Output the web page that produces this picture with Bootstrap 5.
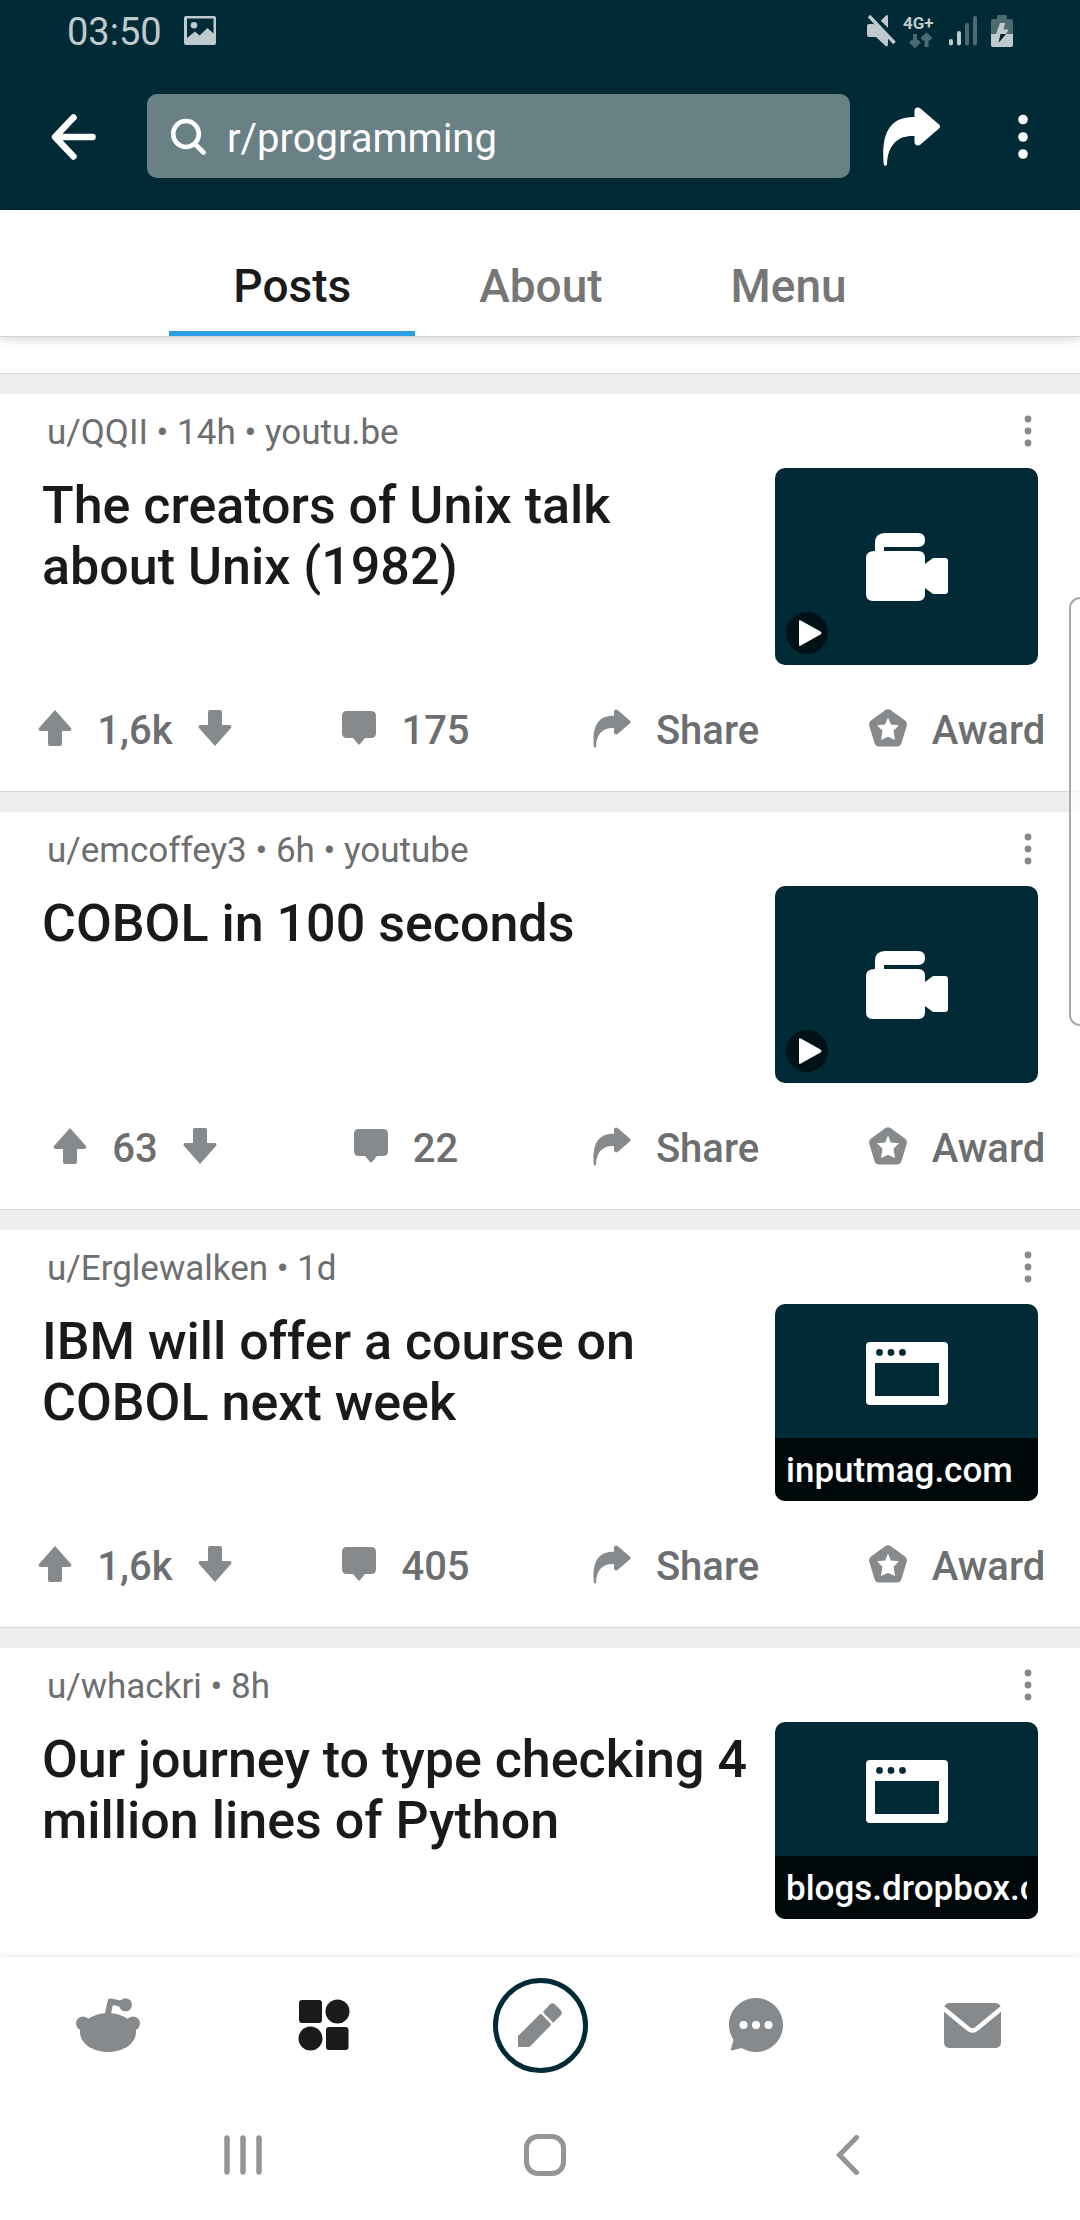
<!DOCTYPE html>
<html lang="en">
<head>
<meta charset="utf-8">
<meta name="viewport" content="width=device-width, initial-scale=1">
<title>r/programming</title>
<link href="https://cdn.jsdelivr.net/npm/bootstrap@5.3.0/dist/css/bootstrap.min.css" rel="stylesheet">
<style>
  :root { --ink: #1a1a1b; --muted: #6c6e70; --icon: #878a8c; --base: #002b36; --strip: #edeef0; }
  body { font-family: Roboto, "Noto Sans", sans-serif; color: var(--ink); background: #fff; }
  svg { display: block; flex: none; }
  button, a { color: inherit; text-decoration: none; }
  .plain { background: none; border: 0; padding: 0; color: inherit; font-weight: inherit; }

  .app-header { background: var(--base); height: 210px; }
  .status-row { height: 62px; padding: 0 67px; color: #bfcacd; font-size: 38px; line-height: 64px; }
  .status-left { gap: 22px; }
  .status-icons { gap: 14px; margin-top: 14px; }
  .status-pair { gap: 7px; }
  .tool-row { height: 148px; padding: 0 52px 0 51px; }
  .back-btn, .more-btn { margin-top: 52px; }
  .share-btn { margin-top: 45px; }
  .search-box { height: 84px; margin: 32px 32px 0 51px; padding: 0 24px; gap: 21px; border-radius: 10px; background: #698085; }
  .search-box input { min-width: 0; background: none; border: 0; outline: 0; padding: 6px 0 0; color: #fff; font-size: 40px; line-height: 48px; }
  .more-btn { padding-left: 77px; }

  .tab-row { height: 127px; border-bottom: 1px solid #d4d4d4; box-shadow: 0 2px 10px rgba(0,0,0,.18); z-index: 2; }
  .tab-row a { padding: 49px 64px 0; font-size: 46px; line-height: 54px; font-weight: 500; color: #767676; border-bottom: 5px solid transparent; }
  .tab-row a.active { color: var(--ink); border-color: #2c9fe5; }

  .lead-gap { height: 36px; }
  .strip { height: 21px; background: var(--strip); border-top: 1px solid #d6d8da; }
  .post { padding-top: 18px; }
  .meta-row { height: 56px; padding: 0 48px 0 47px; font-size: 35px; line-height: 41px; color: var(--muted); }
  .meta-row button { color: var(--icon); margin-top: 3px; }
  .body-row { padding: 0 42px; gap: 20px; }
  .post-title { margin: 7px 0 0; font-size: 52px; line-height: 61px; font-weight: 500; }
  .thumb { flex: none; width: 263px; height: 197px; border-radius: 10px; background: var(--base); color: #fff; }
  .play { left: 11px; bottom: 11px; }
  .host { padding: 0 11px; height: 63px; background: rgba(0,0,0,.8); font-size: 35px; line-height: 66px; font-weight: 500; }
  .action-row { height: 126px; font-size: 40px; line-height: 48px; font-weight: 500; color: var(--muted); }
  .action-row svg { color: var(--icon); }
  .action-row span { padding-top: 5px; }
  .action-row .col-3 { gap: 25px; }
  .action-row button.col-3 { padding-left: 2px; }
  .action-row button.award { padding-left: 24px; }

  .edge-panel { top: 597px; right: 0; width: 11px; height: 429px; border: 2px solid #a9a9a9; border-right: 0; border-radius: 18px 0 0 18px; background: rgba(255,255,255,.75); z-index: 3; }

  .bottom-bar { height: 136px; box-shadow: 0 -2px 6px rgba(0,0,0,.08); color: var(--icon); z-index: 2; }
  .compose { width: 95px; height: 95px; border: 5px solid var(--base); border-radius: 50%; }
  .system-bar { height: 127px; padding: 0 82px 3px 92px; color: #959595; z-index: 3; }
</style>
<script src="https://cdn.jsdelivr.net/npm/bootstrap@5.3.0/dist/js/bootstrap.bundle.min.js"></script>
</head>
<body>
<svg width="0" height="0" class="position-absolute" aria-hidden="true">
  <symbol id="i-share" viewBox="0 0 58 59"><path fill="currentColor" d="M32 10V4C32 .5 35.500-.6 38 1.600L56.500 17.500Q58.500 19.500 56.500 21.500L38 37.500C35.500 39.500 32 38.500 32 35V29C17 28 5.500 36 4.500 57C4.300 59.400 1.500 59.400 1.200 57C-1.500 27 7 9.500 32 10Z"/></symbol>
  <symbol id="i-up" viewBox="0 0 34 36"><path fill="currentColor" d="M17 0L33 18Q34.500 21 31 21H24V34Q24 36 22 36H12Q10 36 10 34V21H3Q-.5 21 1 18Z"/></symbol>
  <symbol id="i-down" viewBox="0 0 34 36"><path fill="currentColor" d="M17 36L33 18Q34.500 15 31 15H24V2Q24 0 22 0H12Q10 0 10 2V15H3Q-.5 15 1 18Z"/></symbol>
  <symbol id="i-comment" viewBox="0 0 34 34"><path fill="currentColor" d="M5 0H29Q34 0 34 5V22Q34 27 29 27H23L18 33Q17 34 16 33L11 27H5Q0 27 0 22V5Q0 0 5 0Z"/></symbol>
  <symbol id="i-award" viewBox="0 0 38 38"><path fill="currentColor" fill-rule="evenodd" d="M16.500 1Q19 -.6 21.500 1L36 11.500Q38.500 13.500 37.800 16.500L32.500 34Q31.400 37.500 28 37.500H10Q6.600 37.500 5.500 34L.2 16.500Q-.5 13.500 2 11.500ZM19 8.500L16.200 15.500L8 16.300L13.500 21.800L12 31L19 27.800L26 31L24.500 21.800L30 16.300L21.800 15.500Z"/></symbol>
  <symbol id="i-dots" viewBox="0 0 8 32"><g fill="currentColor"><circle cx="4" cy="4" r="3.400"/><circle cx="4" cy="16" r="3.400"/><circle cx="4" cy="28" r="3.400"/></g></symbol>
  <symbol id="i-camera" viewBox="0 0 82 68"><path fill="currentColor" d="M9 18V10Q9 0 19 0H52Q59 0 59 7Q59 14 52 14H18V18H52Q59 18 59 25V31L67 25H79Q82 25 82 28V58Q82 61 79 61H67L59 55V61Q59 68 52 68H7Q0 68 0 61V25Q0 18 9 18Z"/></symbol>
  <symbol id="i-play" viewBox="0 0 42 42"><circle cx="21" cy="21" r="21" fill="#001216"/><path fill="#fff" d="M13 9.500Q13 7.600 14.800 8.600L34.500 19.500Q36.500 21 34.500 22.500L14.800 33.600Q13 34.500 13 32.600Z"/></symbol>
  <symbol id="i-window" viewBox="0 0 82 63"><path fill="currentColor" fill-rule="evenodd" d="M4 0H78Q82 0 82 4V59Q82 63 78 63H4Q0 63 0 59V4Q0 0 4 0ZM9 21V54H73V21ZM13.500 7A3.400 3.400 0 1 0 13.500 13.800A3.400 3.400 0 1 0 13.500 7ZM25 7A3.400 3.400 0 1 0 25 13.800A3.400 3.400 0 1 0 25 7ZM36.500 7A3.400 3.400 0 1 0 36.500 13.800A3.400 3.400 0 1 0 36.500 7Z"/></symbol>
</svg>

<div class="d-flex flex-column vh-100 overflow-hidden position-relative">
  <header class="app-header flex-shrink-0">
    <div class="status-row d-flex align-items-start justify-content-between">
      <div class="status-left d-flex">
        <span>03:50</span>
        <svg class="mt-3" width="32" height="29" viewBox="0 0 32 29" fill="currentColor"><path fill-rule="evenodd" d="M2 0H30Q32 0 32 2V27Q32 29 30 29H2Q0 29 0 27V2Q0 0 2 0ZM3 2.500V22L11 15.500L15.500 19.500L23.500 12L29.500 17.500V2.500Z"/><circle cx="10" cy="9.300" r="3.300"/></svg>
      </div>
      <div class="status-icons d-flex">
        <div class="status-pair d-flex">
          <svg width="29" height="33" viewBox="0 0 29 33"><path fill="currentColor" d="M0 12Q0 10 2 10H7L21 20V30Q21 34 18 31.500L9 23H2Q0 23 0 21ZM13.500 7L19 1.500Q21 0 21 2.500V14Z"/><path d="M4 -1L30.500 26" stroke="#002b36" stroke-width="3"/><path d="M2 2L27.500 29" stroke="currentColor" stroke-width="3.500"/></svg>
          <svg class="overflow-visible" width="32" height="34" viewBox="0 0 32 34"><text x="0" y="15" font-size="17" font-weight="700" fill="currentColor">4G+</text><path d="M12 20V30M7.500 27L12 31.500L16.500 27M23.500 33V22M19 25.500L23.500 21L28 25.500" fill="none" stroke="#4d6a71" stroke-width="4"/></svg>
        </div>
        <svg width="28" height="33" viewBox="0 0 28 33" fill="none" stroke-width="4" stroke-linecap="round"><path d="M2 27V29.500M10 19V29.500" stroke="currentColor"/><path d="M18 11V29.500M26 4V29.500" stroke="#4d6a71"/></svg>
        <svg width="22" height="34" viewBox="0 0 22 34"><path fill="#4d6a71" d="M6 5V2Q6 1 7 1H15Q16 1 16 2V5H20Q22 5 22 7V20H0V7Q0 5 2 5Z"/><path fill="currentColor" d="M0 20H22V31Q22 33 20 33H2Q0 33 0 31ZM9 9H14L12.500 15.500H17.500L15 20H5Z"/><path fill="#0b1d22" d="M9.500 20H15L7.500 29Z"/></svg>
      </div>
    </div>
    <div class="tool-row d-flex align-items-start">
      <button class="plain back-btn" type="button" aria-label="Back">
        <svg width="45" height="46" viewBox="0 0 45 46" fill="none" stroke="#fff" stroke-width="6.500" stroke-linecap="round" stroke-linejoin="round"><path d="M22.500 3.500L4 23L22.500 42.500M5 23H41.500"/></svg>
      </button>
      <div class="search-box d-flex align-items-center flex-grow-1">
        <label for="search" aria-label="Search"><svg width="35" height="37" viewBox="0 0 35 37" fill="none" stroke="#fff" stroke-width="4.600" stroke-linecap="round"><ellipse cx="15" cy="16" rx="12.800" ry="13"/><path d="M24.500 26.500L32.500 34.500"/></svg></label>
        <input id="search" class="flex-grow-1" type="text" value="r/programming">
      </div>
      <button class="plain share-btn text-white" type="button" aria-label="Share"><svg width="59" height="59"><use href="#i-share"/></svg></button>
      <button class="plain more-btn" type="button" aria-label="More">
        <svg width="10" height="46" viewBox="0 0 10 46" fill="#fff"><circle cx="5" cy="5.500" r="4.800"/><circle cx="5" cy="23" r="4.800"/><circle cx="5" cy="40" r="4.800"/></svg>
      </button>
    </div>
  </header>

  <nav class="tab-row d-flex justify-content-center flex-shrink-0 position-relative bg-white">
    <a class="active" href="#">Posts</a>
    <a href="#">About</a>
    <a href="#">Menu</a>
  </nav>

  <main class="flex-grow-1 overflow-hidden">
    <div class="lead-gap"></div>
    <div class="strip"></div>

    <article class="post">
      <div class="meta-row d-flex justify-content-between align-items-start">
        <span>u/QQII • 14h • youtu.be</span>
        <button class="plain" type="button" aria-label="Post options"><svg width="8" height="32"><use href="#i-dots"/></svg></button>
      </div>
      <div class="body-row d-flex justify-content-between align-items-start">
        <h2 class="post-title">The creators of Unix talk about Unix (1982)</h2>
        <a class="thumb d-flex align-items-center justify-content-center position-relative" href="#" aria-label="Play video">
          <svg width="82" height="68"><use href="#i-camera"/></svg>
          <svg class="play position-absolute" width="42" height="42"><use href="#i-play"/></svg>
        </a>
      </div>
      <div class="action-row row g-0">
        <div class="col-3 d-flex align-items-center justify-content-center">
          <button class="plain" type="button" aria-label="Upvote"><svg width="34" height="36"><use href="#i-up"/></svg></button><span>1,6k</span><button class="plain" type="button" aria-label="Downvote"><svg width="34" height="36"><use href="#i-down"/></svg></button>
        </div>
        <button class="plain col-3 d-flex align-items-center justify-content-center" type="button"><svg width="34" height="34"><use href="#i-comment"/></svg><span>175</span></button>
        <button class="plain col-3 d-flex align-items-center justify-content-center" type="button"><svg width="38" height="39"><use href="#i-share"/></svg><span>Share</span></button>
        <button class="plain award col-3 d-flex align-items-center justify-content-center" type="button"><svg width="38" height="38"><use href="#i-award"/></svg><span>Award</span></button>
      </div>
    </article>
    <div class="strip"></div>

    <article class="post">
      <div class="meta-row d-flex justify-content-between align-items-start">
        <span>u/emcoffey3 • 6h • youtube</span>
        <button class="plain" type="button" aria-label="Post options"><svg width="8" height="32"><use href="#i-dots"/></svg></button>
      </div>
      <div class="body-row d-flex justify-content-between align-items-start">
        <h2 class="post-title">COBOL in 100 seconds</h2>
        <a class="thumb d-flex align-items-center justify-content-center position-relative" href="#" aria-label="Play video">
          <svg width="82" height="68"><use href="#i-camera"/></svg>
          <svg class="play position-absolute" width="42" height="42"><use href="#i-play"/></svg>
        </a>
      </div>
      <div class="action-row row g-0">
        <div class="col-3 d-flex align-items-center justify-content-center">
          <button class="plain" type="button" aria-label="Upvote"><svg width="34" height="36"><use href="#i-up"/></svg></button><span>63</span><button class="plain" type="button" aria-label="Downvote"><svg width="34" height="36"><use href="#i-down"/></svg></button>
        </div>
        <button class="plain col-3 d-flex align-items-center justify-content-center" type="button"><svg width="34" height="34"><use href="#i-comment"/></svg><span>22</span></button>
        <button class="plain col-3 d-flex align-items-center justify-content-center" type="button"><svg width="38" height="39"><use href="#i-share"/></svg><span>Share</span></button>
        <button class="plain award col-3 d-flex align-items-center justify-content-center" type="button"><svg width="38" height="38"><use href="#i-award"/></svg><span>Award</span></button>
      </div>
    </article>
    <div class="strip"></div>

    <article class="post">
      <div class="meta-row d-flex justify-content-between align-items-start">
        <span>u/Erglewalken • 1d</span>
        <button class="plain" type="button" aria-label="Post options"><svg width="8" height="32"><use href="#i-dots"/></svg></button>
      </div>
      <div class="body-row d-flex justify-content-between align-items-start">
        <h2 class="post-title">IBM will offer a course on COBOL next week</h2>
        <a class="thumb d-flex flex-column overflow-hidden" href="#">
          <div class="flex-grow-1 d-flex align-items-center justify-content-center pt-1"><svg width="82" height="63"><use href="#i-window"/></svg></div>
          <div class="host"><div class="overflow-hidden text-nowrap">inputmag.com</div></div>
        </a>
      </div>
      <div class="action-row row g-0">
        <div class="col-3 d-flex align-items-center justify-content-center">
          <button class="plain" type="button" aria-label="Upvote"><svg width="34" height="36"><use href="#i-up"/></svg></button><span>1,6k</span><button class="plain" type="button" aria-label="Downvote"><svg width="34" height="36"><use href="#i-down"/></svg></button>
        </div>
        <button class="plain col-3 d-flex align-items-center justify-content-center" type="button"><svg width="34" height="34"><use href="#i-comment"/></svg><span>405</span></button>
        <button class="plain col-3 d-flex align-items-center justify-content-center" type="button"><svg width="38" height="39"><use href="#i-share"/></svg><span>Share</span></button>
        <button class="plain award col-3 d-flex align-items-center justify-content-center" type="button"><svg width="38" height="38"><use href="#i-award"/></svg><span>Award</span></button>
      </div>
    </article>
    <div class="strip"></div>

    <article class="post">
      <div class="meta-row d-flex justify-content-between align-items-start">
        <span>u/whackri • 8h</span>
        <button class="plain" type="button" aria-label="Post options"><svg width="8" height="32"><use href="#i-dots"/></svg></button>
      </div>
      <div class="body-row d-flex justify-content-between align-items-start">
        <h2 class="post-title">Our journey to type checking 4 million lines of Python</h2>
        <a class="thumb d-flex flex-column overflow-hidden" href="#">
          <div class="flex-grow-1 d-flex align-items-center justify-content-center pt-1"><svg width="82" height="63"><use href="#i-window"/></svg></div>
          <div class="host"><div class="overflow-hidden text-nowrap">blogs.dropbox.com</div></div>
        </a>
      </div>
    </article>
  </main>

  <div class="edge-panel position-absolute"></div>

  <nav class="bottom-bar row g-0 flex-shrink-0 position-relative bg-white" aria-label="Main">
    <a class="col d-flex align-items-center justify-content-center" href="#" aria-label="Home">
      <svg width="64" height="54" viewBox="0 0 64 54" fill="currentColor"><circle cx="7" cy="25.500" r="7"/><circle cx="57" cy="25.500" r="7"/><path d="M32 15C47 15 60 24 60 34C60 45 48 54 32 54S4 45 4 34C4 24 17 15 32 15Z"/><path d="M31.500 18L34.500 3.500L49 6.500" fill="none" stroke="currentColor" stroke-width="6" stroke-linejoin="round"/><circle cx="49.500" cy="6.800" r="6.500"/></svg>
    </a>
    <a class="col d-flex align-items-center justify-content-center" href="#" aria-label="Communities">
      <svg width="52" height="52" viewBox="0 0 52 52" fill="#1a1a1b"><rect x="1" y="1" width="23" height="23" rx="3"/><circle cx="39.500" cy="12.500" r="12"/><circle cx="12.500" cy="39.500" r="12"/><rect x="28" y="28" width="22.500" height="23" rx="3"/></svg>
    </a>
    <div class="col d-flex align-items-center justify-content-center">
      <button class="plain compose d-flex align-items-center justify-content-center" type="button" aria-label="Create post">
        <svg width="44" height="44" viewBox="0 0 44 44" fill="currentColor"><path d="M0 33L22 11Q23 10.500 24 11.500L32.500 20.500Q33.500 21.500 32.500 22.500L11.500 44H1Q0 44 0 43ZM25.500 8.500L32 1.300Q34.500 -1 37 1.300L42.500 7Q45 9.500 43 12L36 19Q35.500 20 34.500 19L25.500 10Q25 9.300 25.500 8.500Z"/></svg>
      </button>
    </div>
    <a class="col d-flex align-items-center justify-content-center" href="#" aria-label="Chat">
      <svg width="54" height="54" viewBox="0 0 54 54"><path fill="currentColor" d="M27 0C42 0 54 12 54 27S42 54 27 54Q19.500 54 12.500 50L4 52.300Q1.500 53 2 50.500L4.500 42Q0 35 0 27C0 12 12 0 27 0Z"/><g fill="#fff"><circle cx="14.500" cy="27" r="4"/><circle cx="27" cy="27" r="4"/><circle cx="39.500" cy="27" r="4"/></g></svg>
    </a>
    <a class="col d-flex align-items-center justify-content-center" href="#" aria-label="Inbox">
      <svg width="57" height="45" viewBox="0 0 57 45"><rect width="57" height="45" rx="5.500" fill="currentColor"/><path d="M-1 5L24.500 26Q28.500 29 32.500 26L58 5" fill="none" stroke="#fff" stroke-width="4.500"/></svg>
    </a>
  </nav>

  <nav class="system-bar row g-0 flex-shrink-0 position-relative bg-white" aria-label="System">
    <button class="plain col d-flex align-items-center justify-content-center" type="button" aria-label="Recents"><svg width="38" height="40" viewBox="0 0 38 40" stroke="currentColor" stroke-width="5.500" stroke-linecap="round"><path d="M3 3V37M19 3V37M35 3V37"/></svg></button>
    <button class="plain col d-flex align-items-center justify-content-center" type="button" aria-label="Home screen"><svg width="42" height="42" viewBox="0 0 42 42" fill="none" stroke="currentColor" stroke-width="5"><rect x="2.500" y="2.500" width="37" height="37" rx="11.500"/></svg></button>
    <button class="plain col d-flex align-items-center justify-content-center" type="button" aria-label="Back"><svg width="23" height="40" viewBox="0 0 23 40" fill="none" stroke="currentColor" stroke-width="5" stroke-linecap="round"><path d="M20.500 2.500L3.500 20L20.500 37.500"/></svg></button>
  </nav>
</div>
</body>
</html>
